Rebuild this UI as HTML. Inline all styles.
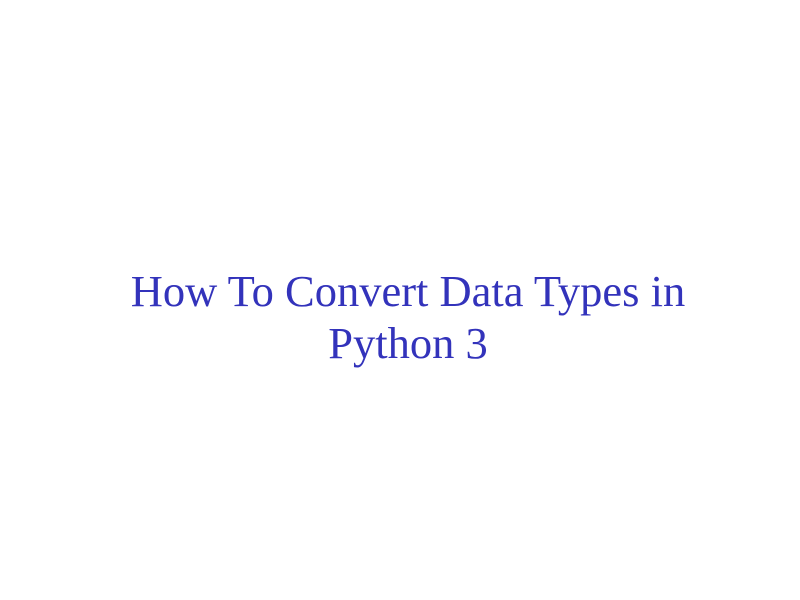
<!DOCTYPE html>
<html><head><style>
html,body{margin:0;padding:0;background:#fff;width:800px;height:600px;overflow:hidden}
.t{position:absolute;left:8px;width:800px;top:265px;text-align:center;font-family:"Liberation Serif",serif;font-size:44.5px;line-height:52px;color:#3333bb}
</style></head><body>
<div class="t">How To Convert Data Types in<br>Python 3</div>
</body></html>
